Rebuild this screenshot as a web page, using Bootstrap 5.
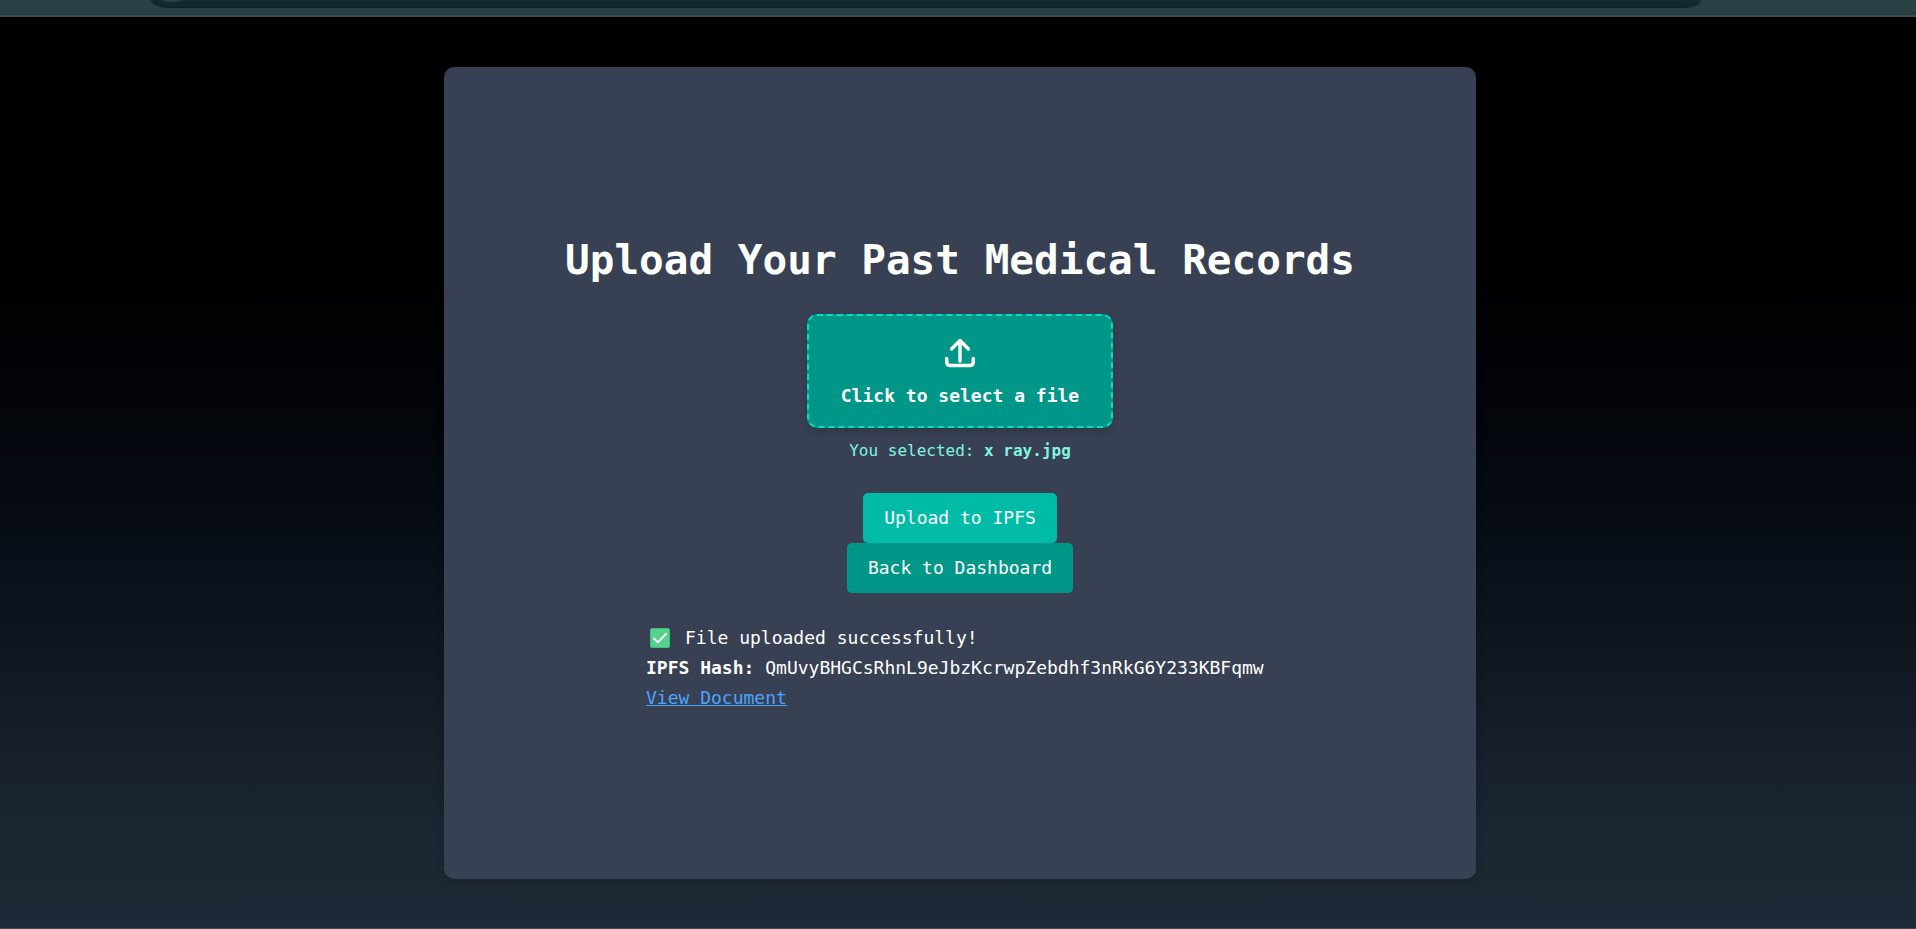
<!DOCTYPE html>
<html lang="en">
<head>
<meta charset="utf-8">
<meta name="viewport" content="width=device-width, initial-scale=1">
<title>Upload Medical Records</title>
<link href="https://cdn.jsdelivr.net/npm/bootstrap@5.3.0/dist/css/bootstrap.min.css" rel="stylesheet">
<style>
  body {
    background: linear-gradient(to bottom, #000 0%, #000 28%, #020408 42%, #050a12 53%, #0e151f 68%, #1a2430 87%, #1f2a38 100%);
    color: #fff;
    font-family: "DejaVu Sans Mono", "Liberation Mono", monospace;
    font-size: 18px;
    line-height: 30px;
  }
  .browser-bar { height: 17px; background: #294045; border-bottom: 2px solid #454b50; padding: 0 215px 0 151px; overflow: hidden; box-shadow: inset 0 -1px #1c4044; }
  .address-pill { height: 8px; background: #12292e; border-bottom: 1px solid #0a2328; border-radius: 0 0 20px 20px / 0 0 8px 8px; padding-left: 11px; overflow: hidden; }
  .site-chip { width: 20px; height: 2px; background: #294045; border-radius: 0 0 10px 10px / 0 0 2px 2px; }
  .page-main { padding: 50px 0 49px 4px; border-bottom: 1px solid #4a424c; }
  .upload-panel { max-width: 1032px; padding-top: 2px; background: #374153; border-radius: 10px; box-shadow: 0 4px 10px rgba(0, 0, 0, .15); }
  .upload-title { font-size: 41px; line-height: 50px; font-weight: 700; margin-bottom: 29px; }
  .file-picker { width: 306px; height: 114px; padding-top: 6px; background: #009688; border: 2px dashed #00e0c6; border-radius: 10px; font-weight: 700; cursor: pointer; box-shadow: 0 4px 8px rgba(0, 0, 0, .15); }
  .file-picker svg { margin-bottom: 13px; }
  .selected-note { color: #80f5e0; font-size: 16px; margin: 8px 0 27px; }
  .btn-teal { --bs-btn-color: #fff; --bs-btn-hover-color: #fff; --bs-btn-bg: #009688; --bs-btn-hover-bg: #00796b; --bs-btn-border-width: 0; --bs-btn-padding-x: 21px; --bs-btn-padding-y: 10px; --bs-btn-font-size: 18px; --bs-btn-line-height: 30px; --bs-btn-border-radius: 5px; }
  .btn-bright { --bs-btn-bg: #00bba7; }
  .upload-result { max-width: 628px; margin-top: 30px; overflow-wrap: anywhere; }
  .upload-result a { color: #4da3ff; }
  .check-icon { margin: 0 15px 0 4px; }
</style>
</head>
<body class="d-flex flex-column min-vh-100">
<header class="browser-bar">
  <div class="address-pill"><div class="site-chip"></div></div>
</header>
<main class="page-main flex-grow-1 d-flex justify-content-center">
  <section class="upload-panel w-100 d-flex flex-column align-items-center justify-content-center">
    <h1 class="upload-title text-center">Upload Your Past Medical Records</h1>
    <label for="recordFile" class="file-picker d-flex flex-column align-items-center justify-content-center">
      <svg width="30" height="30" viewBox="0 0 30 30" fill="none" stroke="#fff" stroke-width="3.400" stroke-linecap="round" stroke-linejoin="round" aria-hidden="true">
        <path d="M15 23V3M6.500 11L15 2.500L23.500 11M1.700 20.500V24Q1.700 27.500 5 27.500H25Q28.300 27.500 28.300 24V20.500"/>
      </svg>
      <span>Click to select a file</span>
    </label>
    <input type="file" id="recordFile" class="visually-hidden">
    <p class="selected-note">You selected: <strong>x ray.jpg</strong></p>
    <button type="button" class="btn btn-teal btn-bright">Upload to IPFS</button>
    <button type="button" class="btn btn-teal">Back to Dashboard</button>
    <div class="upload-result w-100">
      <div class="d-flex align-items-center">
        <svg class="check-icon" width="20" height="20" viewBox="0 0 20 20" role="img" aria-label="Done">
          <rect width="20" height="20" rx="2" fill="#42b983"/>
          <rect x="1" y="1" width="18" height="18" rx="1" fill="#55d38c"/>
          <path d="M3.500 10L7.800 14.200L16.500 5.500" fill="none" stroke="#fff" stroke-width="1.800"/>
        </svg>
        <span>File uploaded successfully!</span>
      </div>
      <div><strong>IPFS Hash:</strong> QmUvyBHGCsRhnL9eJbzKcrwpZebdhf3nRkG6Y233KBFqmw</div>
      <a href="#">View Document</a>
    </div>
  </section>
</main>
<script src="https://cdn.jsdelivr.net/npm/bootstrap@5.3.0/dist/js/bootstrap.bundle.min.js"></script>
</body>
</html>
